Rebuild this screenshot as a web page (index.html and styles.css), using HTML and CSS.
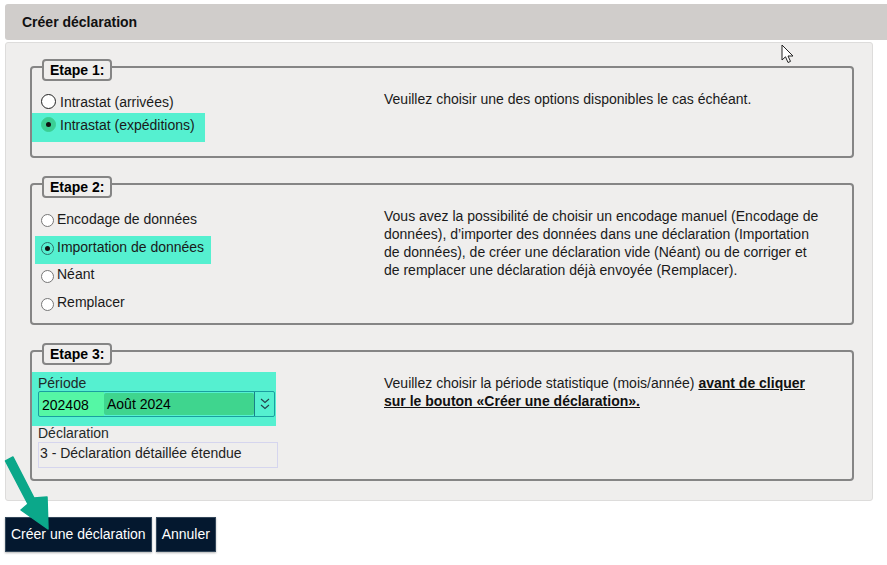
FILE: index.html
```html
<!DOCTYPE html>
<html lang="fr">
<head>
<meta charset="UTF-8">
<title>Créer déclaration</title>
<link rel="stylesheet" href="styles.css">
</head>
<body>
<div class="page-title">Créer déclaration</div>
<div class="panel">
    <div class="step step-one">
        <div class="step-title">Etape 1:</div>
        <div class="step-left">
            <label class="option option-large"><input type="radio" name="flow"><span>Intrastat (arrivées)</span></label>
            <label class="option option-large mark mark-one"><input type="radio" name="flow" checked><span>Intrastat (expéditions)</span></label>
        </div>
        <p class="help">Veuillez choisir une des options disponibles le cas échéant.</p>
    </div>
    <div class="step step-two">
        <div class="step-title">Etape 2:</div>
        <div class="step-left">
            <label class="option"><input type="radio" name="mode"><span>Encodage de données</span></label>
            <label class="option mark mark-two"><input type="radio" name="mode" checked><span>Importation de données</span></label>
            <label class="option option-low"><input type="radio" name="mode"><span>Néant</span></label>
            <label class="option option-low"><input type="radio" name="mode"><span>Remplacer</span></label>
        </div>
        <p class="help">Vous avez la possibilité de choisir un encodage manuel (Encodage de données), d’importer des données dans une déclaration (Importation de données), de créer une déclaration vide (Néant) ou de corriger et de remplacer une déclaration déjà envoyée (Remplacer).</p>
    </div>
    <div class="step step-three">
        <div class="step-title">Etape 3:</div>
        <div class="step-left">
            <div class="mark mark-three">
                <div class="field-label">Période</div>
                <div class="combo">
                    <span class="combo-code">202408</span>
                    <span class="combo-month">Août 2024</span>
                    <span class="combo-btn">
                        <svg width="12" height="14" viewBox="0 0 12 14"><path d="M2 2l4 3.5L10 2M2 8l4 3.5L10 8" fill="none" stroke="#25404a" stroke-width="1.1"/></svg>
                    </span>
                </div>
            </div>
            <div class="field-label field-label-two">Déclaration</div>
            <div class="readonly-box">3 - Déclaration détaillée étendue</div>
        </div>
        <p class="help">Veuillez choisir la période statistique (mois/année) <a class="strong-link" href="#">avant de cliquer sur le bouton «Créer une déclaration».</a></p>
    </div>
</div>
<div class="actions">
    <button class="btn">Créer une déclaration</button>
    <button class="btn">Annuler</button>
</div>

<svg class="arrow" width="56" height="76" viewBox="0 0 56 76">
    <path d="M1.5 5 L9 1 L30 42 L43 41 L44 73 L17 54 L24 48 Z" fill="#0ba88a" stroke="#0ba88a" stroke-width="1.5" stroke-linejoin="round"/>
</svg>
<svg class="cursor" width="14" height="21" viewBox="0 0 14 21">
    <path d="M1 1 V16 L4.5 12.8 L7 18.5 L9.5 17.4 L7 12 H12 Z" fill="#fff" stroke="#222" stroke-width="1"/>
</svg>
</body>
</html>
```

FILE: styles.css
```css
body {
    margin: 0;
    padding: 4px 0 0 5px;
    background-color: #fff;
    color: #000;
    font-family: "Liberation Sans", Arial, sans-serif;
    font-size: 14px;
    overflow: hidden;
    height: 561px;
    box-sizing: border-box;
    position: relative;
}
.page-title {
    height: 36px;
    line-height: 36px;
    padding-left: 17px;
    background-color: #d0cdcb;
    border-radius: 3px 0 0 3px;
    font-size: 14px;
    font-weight: bold;
    color: #111;
}
.panel {
    width: 868px;
    height: 459px;
    margin-top: 2px;
    box-sizing: border-box;
    padding: 23px 18px 0 24px;
    background-color: #efeeed;
    border: 1px solid #dddcdb;
    border-radius: 3px;
}
.step {
    display: flex;
    margin-bottom: 25px;
    box-sizing: border-box;
    border: 2px solid #858585;
    border-radius: 4px;
    position: relative;
}
.step-title {
    position: absolute;
    left: 10px;
    top: -9px;
    width: 70px;
    height: 22px;
    line-height: 18px;
    padding-left: 6px;
    box-sizing: border-box;
    background-color: #efeeed;
    border: 2px solid #858585;
    border-radius: 4px;
    font-weight: bold;
    font-size: 14px;
}
.step-one { height: 92px; }
.step-two { height: 142px; }
.step-three { height: 131px; margin-bottom: 0; }
.step-left {
    width: 352px;
    flex: none;
}
.help {
    margin: 0;
    padding-top: 22px;
    width: 436px;
    line-height: 18px;
    color: #1a1a1a;
}
.step-two .help { width: 440px; }
.strong-link {
    color: #111;
    font-weight: bold;
    text-decoration: underline;
}
.option {
    display: flex;
    align-items: center;
    height: 28px;
    padding-left: 7px;
    color: #1a1a1a;
}
.option span { margin-top: -3px; }
.option-low span { margin-top: -5px; }
.option input {
    appearance: none;
    width: 13px;
    height: 13px;
    margin: 0 3px 0 2px;
    border: 1px solid #767676;
    border-radius: 50%;
    background-color: #fff;
    position: relative;
    flex: none;
}
.option input:checked {
    background-color: transparent;
    border-color: #2f6f6a;
}
.option input:checked::after {
    content: "";
    position: absolute;
    left: 3px;
    top: 3px;
    width: 5px;
    height: 5px;
    border-radius: 50%;
    background-color: #111;
}
.option-large {
    height: 23px;
    padding-left: 9px;
}
.option-large span { margin-top: 0; }
.option-large input {
    width: 15px;
    height: 15px;
    margin: 0 4px 0 0;
    border: 1px solid #222;
}
.option-large input:checked {
    background-color: #3bcf94;
    border-color: #3bcf94;
}
.option-large input:checked::after {
    left: 4px;
    top: 4px;
}
.step-one .step-left { padding-top: 22px; }
.step-two .step-left { padding-top: 21px; }
.mark { background-color: #55f0d0; }
.mark-one {
    width: 173px;
    height: 29px;
    padding-bottom: 6px;
    box-sizing: border-box;
}
.mark-two {
    width: 176px;
    margin: 2px 0 -2px 3px;
    padding: 0 0 4px 4px;
    box-sizing: border-box;
}
.mark-three {
    width: 244px;
    height: 54px;
    margin-top: 20px;
    padding: 3px 0 0 6px;
    box-sizing: border-box;
}
.field-label {
    line-height: 16px;
    color: #1f2a2a;
}
.field-label-two { margin: -1px 0 0 6px; }
.combo {
    display: flex;
    align-items: center;
    width: 237px;
    height: 26px;
    box-sizing: border-box;
    border: 1px solid #1a9fa0;
    border-radius: 2px;
    background: linear-gradient(to right, #55f7a5 0, #55f7a5 65px, #55f0d0 65px);
}
.combo-code {
    width: 65px;
    padding: 1px 0 0 3px;
    box-sizing: border-box;
    flex: none;
}
.combo-month {
    width: 150px;
    height: 22px;
    line-height: 22px;
    padding-left: 3px;
    box-sizing: border-box;
    background-color: #3fd58e;
    border-radius: 2px;
    flex: none;
}
.combo-btn {
    display: flex;
    align-items: center;
    justify-content: center;
    flex: 1;
    height: 100%;
    border-left: 1px solid #1a7f88;
}
.readonly-box {
    width: 240px;
    height: 26px;
    line-height: 20px;
    margin: 1px 0 0 6px;
    padding-left: 1px;
    box-sizing: border-box;
    border: 1px solid #d5d5ee;
    color: #222;
}
.actions {
    display: flex;
    gap: 4px;
    margin-top: 16px;
}
.btn {
    height: 35px;
    padding: 0 5px 2px;
    background-color: #04182f;
    color: #fff;
    border: 1px solid #33475a;
    font-family: "Liberation Sans", Arial, sans-serif;
    font-size: 14px;
    box-shadow: 0 1px 2px rgba(0, 0, 0, 0.3);
}
.arrow {
    position: absolute;
    left: 4px;
    top: 456px;
}
.cursor {
    position: absolute;
    left: 781px;
    top: 44px;
}
```
